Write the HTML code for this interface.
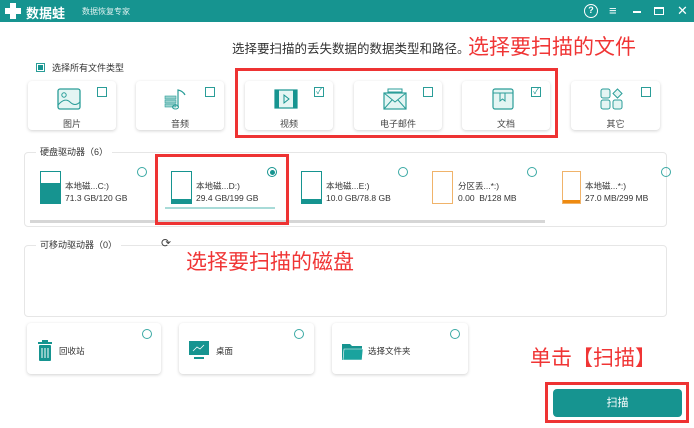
<!DOCTYPE html>
<html><head><meta charset="utf-8"><style>
*{margin:0;padding:0;box-sizing:border-box}
body{width:694px;height:428px;background:#fff;position:relative;overflow:hidden;font-family:"Liberation Sans","Noto Sans CJK SC",sans-serif;color:#333}
.a{position:absolute}
.card{position:absolute;background:#fff;border-radius:4px;box-shadow:0 1px 3px rgba(0,0,0,.18)}
.cb{position:absolute;width:10px;height:10px;border:1.2px solid #2a9d98;background:#fff}
.lbl{position:absolute;font-size:9px;color:#444;width:100%;text-align:center;top:36px}
.red{color:#f03535;position:absolute;white-space:nowrap}
.rb{position:absolute;border:3px solid #ee3333}
.radio{position:absolute;width:10px;height:10px;border:1.2px solid #3aa9a4;border-radius:50%}
.dt{position:absolute;font-size:8.5px;color:#333;line-height:12px;white-space:nowrap}
</style></head><body>
<div class="a" style="left:0;top:0;width:694px;height:22px;background:#169490"></div>
<div class="a" style="left:5px;top:3px;width:16px;height:16px">
<div class="a" style="left:5px;top:0;width:6px;height:16px;background:#fff"></div>
<div class="a" style="left:0;top:5px;width:16px;height:6px;background:#fff"></div></div>
<div class="a" style="left:26px;top:3px;color:#fff;font-size:13px;font-weight:bold">数据蛙</div>
<div class="a" style="left:82px;top:6px;color:#e0f2f1;font-size:8px">数据恢复专家</div>
<div class="a" style="left:584px;top:4px;width:14px;height:14px;border:1.5px solid #fff;border-radius:50%;color:#fff;font-size:9px;text-align:center;line-height:11px;font-weight:bold">?</div>
<div class="a" style="left:609px;top:5px;color:#fff;font-size:13px;line-height:12px">≡</div>
<div class="a" style="left:633px;top:11px;width:8px;height:1.5px;background:#fff"></div>
<div class="a" style="left:654px;top:7px;width:10px;height:8px;border:1.5px solid #fff;border-top-width:2px"></div>
<div class="a" style="left:677px;top:3px;color:#fff;font-size:13px">✕</div>

<div class="a" style="left:232px;top:38px;font-size:12.5px;color:#333">选择要扫描的丢失数据的数据类型和路径。</div>
<div class="red" style="left:468px;top:31px;font-size:21px">选择要扫描的文件</div>

<div class="a" style="left:36px;top:63px;width:9px;height:9px;border:1.2px solid #2a9d98;padding:1.3px"><div style="width:100%;height:100%;background:#169490"></div></div>
<div class="a" style="left:52px;top:61px;font-size:9px;color:#333">选择所有文件类型</div>

<div class="card" style="left:28px;top:81px;width:88px;height:49px"><div class="cb" style="left:69px;top:6px"></div>
<svg class="a" style="left:29px;top:7px" width="24" height="22"><rect x="1" y="1" width="22" height="20" rx="2" fill="#e4f5f3" stroke="#2a9d98" stroke-width="1.3"/><circle cx="7" cy="7" r="2.2" fill="none" stroke="#2a9d98"/><path d="M1 17 Q8 9 13 14 T23 14" fill="none" stroke="#2a9d98"/></svg><div class="lbl">图片</div></div>
<div class="card" style="left:136px;top:81px;width:88px;height:49px"><div class="cb" style="left:69px;top:6px"></div>
<svg class="a" style="left:28px;top:7px" width="26" height="22"><rect x="1" y="8" width="11" height="3" fill="#9bd3cf" stroke="#2a9d98" stroke-width=".6"/><rect x="1" y="12" width="11" height="3" fill="#9bd3cf" stroke="#2a9d98" stroke-width=".6"/><rect x="1" y="16" width="11" height="3" fill="#9bd3cf" stroke="#2a9d98" stroke-width=".6"/><path d="M14 19 V2 Q19 3 21 7" fill="none" stroke="#2a9d98" stroke-width="1.2"/><ellipse cx="11.5" cy="19" rx="3" ry="2" fill="none" stroke="#2a9d98"/></svg><div class="lbl">音频</div></div>
<div class="card" style="left:245px;top:81px;width:88px;height:49px"><div class="cb" style="left:69px;top:6px;font-size:8px;color:#169490;line-height:8px;text-align:center">✓</div>
<svg class="a" style="left:29px;top:8px" width="24" height="20"><rect x="1" y="1" width="22" height="18" fill="#e4f5f3" stroke="#169490" stroke-width="1.2"/><rect x="1" y="1" width="4" height="18" fill="#169490"/><rect x="19" y="1" width="4" height="18" fill="#169490"/><path d="M10 6 L15 10 L10 14 Z" fill="none" stroke="#169490"/></svg><div class="lbl">视频</div></div>
<div class="card" style="left:354px;top:81px;width:88px;height:49px"><div class="cb" style="left:69px;top:6px"></div>
<svg class="a" style="left:29px;top:7px" width="24" height="22"><rect x="5" y="1" width="14" height="3" fill="none" stroke="#2a9d98"/><rect x="1" y="5" width="22" height="16" fill="#e4f5f3" stroke="#2a9d98" stroke-width="1.2"/><path d="M1 5 L12 14 L23 5 M1 21 L9 12 M23 21 L15 12" fill="none" stroke="#2a9d98"/></svg><div class="lbl">电子邮件</div></div>
<div class="card" style="left:462px;top:81px;width:88px;height:49px"><div class="cb" style="left:69px;top:6px;font-size:8px;color:#169490;line-height:8px;text-align:center">✓</div>
<svg class="a" style="left:30px;top:7px" width="22" height="22"><rect x="1" y="1" width="20" height="20" rx="2" fill="#e4f5f3" stroke="#2a9d98" stroke-width="1.2"/><path d="M1 5 H21 M8 5 V13 L10.5 11 L13 13 V5" fill="none" stroke="#2a9d98"/></svg><div class="lbl">文档</div></div>
<div class="card" style="left:571px;top:81px;width:89px;height:49px"><div class="cb" style="left:70px;top:6px"></div>
<svg class="a" style="left:29px;top:7px" width="24" height="22"><rect x="1" y="1" width="9" height="9" rx="2" fill="#e4f5f3" stroke="#2a9d98"/><path d="M17.5 1 L22 5.5 L17.5 10 L13 5.5 Z" fill="#e4f5f3" stroke="#2a9d98"/><rect x="1" y="12" width="9" height="9" rx="2" fill="#e4f5f3" stroke="#2a9d98"/><rect x="13" y="12" width="9" height="9" rx="2" fill="#e4f5f3" stroke="#2a9d98"/></svg><div class="lbl">其它</div></div>
<div class="rb" style="left:235px;top:68px;width:323px;height:70px"></div>

<div class="a" style="left:24px;top:152px;width:643px;height:75px;border:1px solid #e6e6e6;border-radius:4px"></div>
<div class="a" style="left:36px;top:145px;background:#fff;padding:0 4px;font-size:9px;color:#333">硬盘驱动器（6）</div>
<div class="a" style="left:30px;top:220px;width:515px;height:3px;background:#d6d6d6"></div>

<div class="a" style="left:40px;top:171px;width:21px;height:33px;border:1px solid #169490;background:#fff"><div class="a" style="left:0;bottom:0;width:19px;height:20px;background:#169490"></div><div class="a" style="left:6px;top:16px;color:#fff;font-size:8px"></div></div>
<div class="dt" style="left:65px;top:180px">本地磁...C:)<br>71.3 GB/120 GB</div>
<div class="radio" style="left:137px;top:167px"></div>

<div class="a" style="left:171px;top:171px;width:21px;height:33px;border:1px solid #169490"><div class="a" style="left:0;bottom:0;width:19px;height:4px;background:#169490"></div></div>
<div class="dt" style="left:196px;top:180px">本地磁...D:)<br>29.4 GB/199 GB</div>
<div class="a" style="left:267px;top:167px;width:10px;height:10px;border:1.2px solid #169490;border-radius:50%;padding:1.5px"><div style="width:100%;height:100%;border-radius:50%;background:#169490"></div></div>
<div class="a" style="left:165px;top:207px;width:110px;height:2px;background:#a8dbd8"></div>
<div class="rb" style="left:155px;top:154px;width:134px;height:71px"></div>

<div class="a" style="left:301px;top:171px;width:21px;height:33px;border:1px solid #169490"><div class="a" style="left:0;bottom:0;width:19px;height:4px;background:#169490"></div></div>
<div class="dt" style="left:326px;top:180px">本地磁...E:)<br>10.0 GB/78.8 GB</div>
<div class="radio" style="left:398px;top:167px"></div>

<div class="a" style="left:432px;top:171px;width:21px;height:33px;border:1px solid #f0b36a"></div>
<div class="dt" style="left:458px;top:180px">分区丢...*:)<br>0.00 &nbsp;B/128 MB</div>
<div class="radio" style="left:527px;top:167px"></div>

<div class="a" style="left:562px;top:171px;width:19px;height:33px;border:1px solid #f0b36a"><div class="a" style="left:0;bottom:0;width:17px;height:3px;background:#ee8a10"></div></div>
<div class="dt" style="left:585px;top:180px">本地磁...*:)<br>27.0 MB/299 MB</div>
<div class="radio" style="left:661px;top:167px"></div>

<div class="a" style="left:24px;top:245px;width:643px;height:72px;border:1px solid #e6e6e6;border-radius:4px"></div>
<div class="a" style="left:36px;top:238px;background:#fff;padding:0 4px;font-size:9px;color:#333">可移动驱动器（0）</div>
<div class="a" style="left:161px;top:236px;font-size:12px;color:#444">⟳</div>
<div class="red" style="left:186px;top:246px;font-size:21px">选择要扫描的磁盘</div>

<div class="card" style="left:27px;top:323px;width:134px;height:51px"><div class="radio" style="left:115px;top:6px"></div>
<svg class="a" style="left:10px;top:17px" width="16" height="22"><rect x="1" y="2" width="14" height="2" fill="#169490"/><rect x="5" y="0" width="6" height="2" fill="#169490"/><rect x="2" y="5" width="12" height="16" rx="1" fill="#169490"/><path d="M5 8 V18 M8 8 V18 M11 8 V18" stroke="#fff"/></svg>
<div class="a" style="left:32px;top:22px;font-size:8.5px">回收站</div></div>
<div class="card" style="left:179px;top:323px;width:135px;height:51px"><div class="radio" style="left:115px;top:6px"></div>
<svg class="a" style="left:10px;top:18px" width="20" height="20"><rect x="0" y="0" width="20" height="14" fill="#169490"/><path d="M4 10 L8 6 L11 8 L15 4" stroke="#fff" fill="none" stroke-width=".8"/><rect x="5" y="16" width="10" height="2" fill="#169490"/></svg>
<div class="a" style="left:37px;top:22px;font-size:8.5px">桌面</div></div>
<div class="card" style="left:332px;top:323px;width:136px;height:51px"><div class="radio" style="left:118px;top:6px"></div>
<svg class="a" style="left:10px;top:19px" width="22" height="20"><path d="M0 2 H8 L10 4 H20 V18 H0 Z" fill="#169490"/><path d="M2 7 H21 L20 18 H1 Z" fill="#1aa39e" stroke="#fff" stroke-width=".6"/></svg>
<div class="a" style="left:36px;top:22px;font-size:8.5px">选择文件夹</div></div>

<div class="red" style="left:530px;top:342px;font-size:21px">单击【扫描】</div>
<div class="a" style="left:553px;top:389px;width:129px;height:28px;background:#169490;border-radius:4px;color:#fff;font-size:11px;text-align:center;line-height:28px">扫描</div>
<div class="rb" style="left:545px;top:382px;width:144px;height:41px"></div>
</body></html>
